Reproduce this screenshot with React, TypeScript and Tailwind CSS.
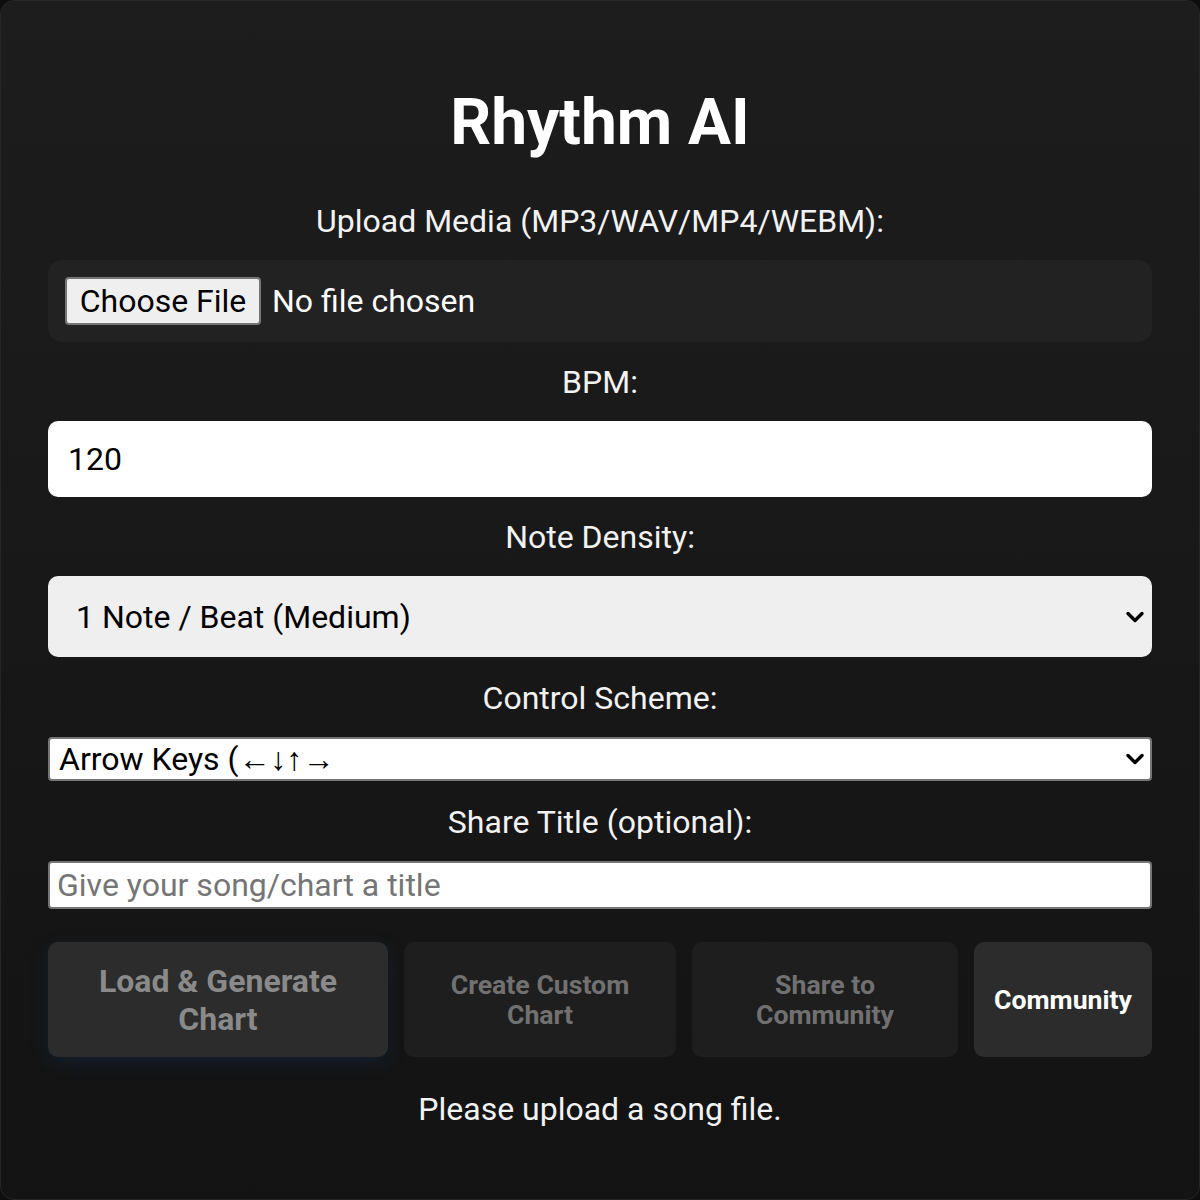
import { useState } from 'react';

const DENSIDADES = [
  { value: '0.5', label: '1 Note / 2 Beats (Easy)' },
  { value: '1', label: '1 Note / Beat (Medium)' },
  { value: '2', label: '2 Notes / Beat (Hard)' },
];

function Chevron() {
  return (
    <svg width="20" height="12" viewBox="0 0 20 12" className="pointer-events-none absolute right-[7px] top-1/2 -translate-y-1/2">
      <path d="M3 2.5l7 7 7-7" fill="none" stroke="#000" strokeWidth="3.4" strokeLinecap="round" strokeLinejoin="round" />
    </svg>
  );
}

function Label({ children, top = 'mt-4' }: { children: string; top?: string }) {
  return <label className={`${top} mb-[15px] block text-center text-[32px] leading-[48px] text-[#f2f2f2]`}>{children}</label>;
}

export default function App() {
  const [bpm, setBpm] = useState('120');
  const [densidade, setDensidade] = useState('1');
  const [controle, setControle] = useState('arrows');
  const [titulo, setTitulo] = useState('');

  return (
    <div className="min-h-[1200px] bg-[#0e0e0e] font-['Roboto','Liberation_Sans',sans-serif]">
      <div className="min-h-[1200px] rounded-[14px] border border-[#262626] bg-gradient-to-b from-[#1d1d1d] to-[#131313] px-[47px] pt-[84px] pb-10">
        <h1 className="text-center text-[64px] font-bold leading-[76px] text-white">Rhythm AI</h1>

        <div className="mt-[36px] flex flex-col">
          <label className="mb-[15px] block text-center text-[32px] leading-[48px] text-[#f2f2f2]">
            Upload Media (MP3/WAV/MP4/WEBM):
          </label>
          <div className="flex h-[82px] items-center gap-[11px] rounded-[14px] bg-[#222222] px-[17px]">
            <span className="flex h-[48px] w-[196px] items-center justify-center rounded-[4px] border-2 border-[#767676] bg-[#efefef] text-[32px] text-black">
              Choose File
            </span>
            <span className="text-[32px] text-white">No file chosen</span>
          </div>

          <Label>BPM:</Label>
          <input
            value={bpm}
            onChange={(e) => setBpm(e.target.value)}
            className="h-[76px] w-full rounded-[10px] bg-white px-5 text-[32px] text-black outline-none"
          />

          <Label>Note Density:</Label>
          <div className="relative">
            <select
              value={densidade}
              onChange={(e) => setDensidade(e.target.value)}
              className="h-[81px] w-full appearance-none rounded-[10px] bg-[#efefef] pl-[28px] text-[32px] text-black outline-none"
            >
              {DENSIDADES.map((d) => (
                <option key={d.value} value={d.value}>{d.label}</option>
              ))}
            </select>
            <Chevron />
          </div>

          <Label top="mt-[17px]">Control Scheme:</Label>
          <div className="relative">
            <select
              value={controle}
              onChange={(e) => setControle(e.target.value)}
              className="h-[44px] w-full appearance-none rounded-[4px] border-2 border-[#767676] bg-white pl-[9px] text-[32px] leading-[40px] text-black outline-none"
            >
              <option value="arrows">Arrow Keys (←↓↑→</option>
              <option value="dfjk">DFJK</option>
            </select>
            <Chevron />
          </div>

          <Label top="mt-[17px]">Share Title (optional):</Label>
          <input
            value={titulo}
            onChange={(e) => setTitulo(e.target.value)}
            placeholder="Give your song/chart a title"
            className="h-[48px] w-full rounded-[4px] border-2 border-[#767676] bg-white px-[7px] text-[32px] text-black outline-none placeholder:text-[#757575]"
          />

          <div className="mt-[33px] flex gap-4">
            <button
              disabled
              className="h-[115px] w-[340px] rounded-[10px] bg-[#2c2c2c] px-6 text-[32px] font-bold leading-[38px] text-[#8a8a8a] shadow-[0_6px_18px_rgba(20,60,110,0.25)]"
            >
              Load &amp; Generate Chart
            </button>
            <button disabled className="h-[115px] w-[272px] rounded-[10px] bg-[#1e1e1e] px-8 text-[26.67px] font-bold leading-[30px] text-[#717171]">
              Create Custom Chart
            </button>
            <button disabled className="h-[115px] w-[266px] rounded-[10px] bg-[#1e1e1e] px-8 text-[26.67px] font-bold leading-[30px] text-[#717171]">
              Share to Community
            </button>
            <button className="h-[115px] w-[178px] rounded-[10px] bg-[#2c2c2c] text-[26.67px] font-bold leading-[30px] text-white">
              Community
            </button>
          </div>

          <p className="mt-[28px] text-center text-[32px] leading-[48px] text-[#f2f2f2]">Please upload a song file.</p>
        </div>
      </div>
    </div>
  );
}
